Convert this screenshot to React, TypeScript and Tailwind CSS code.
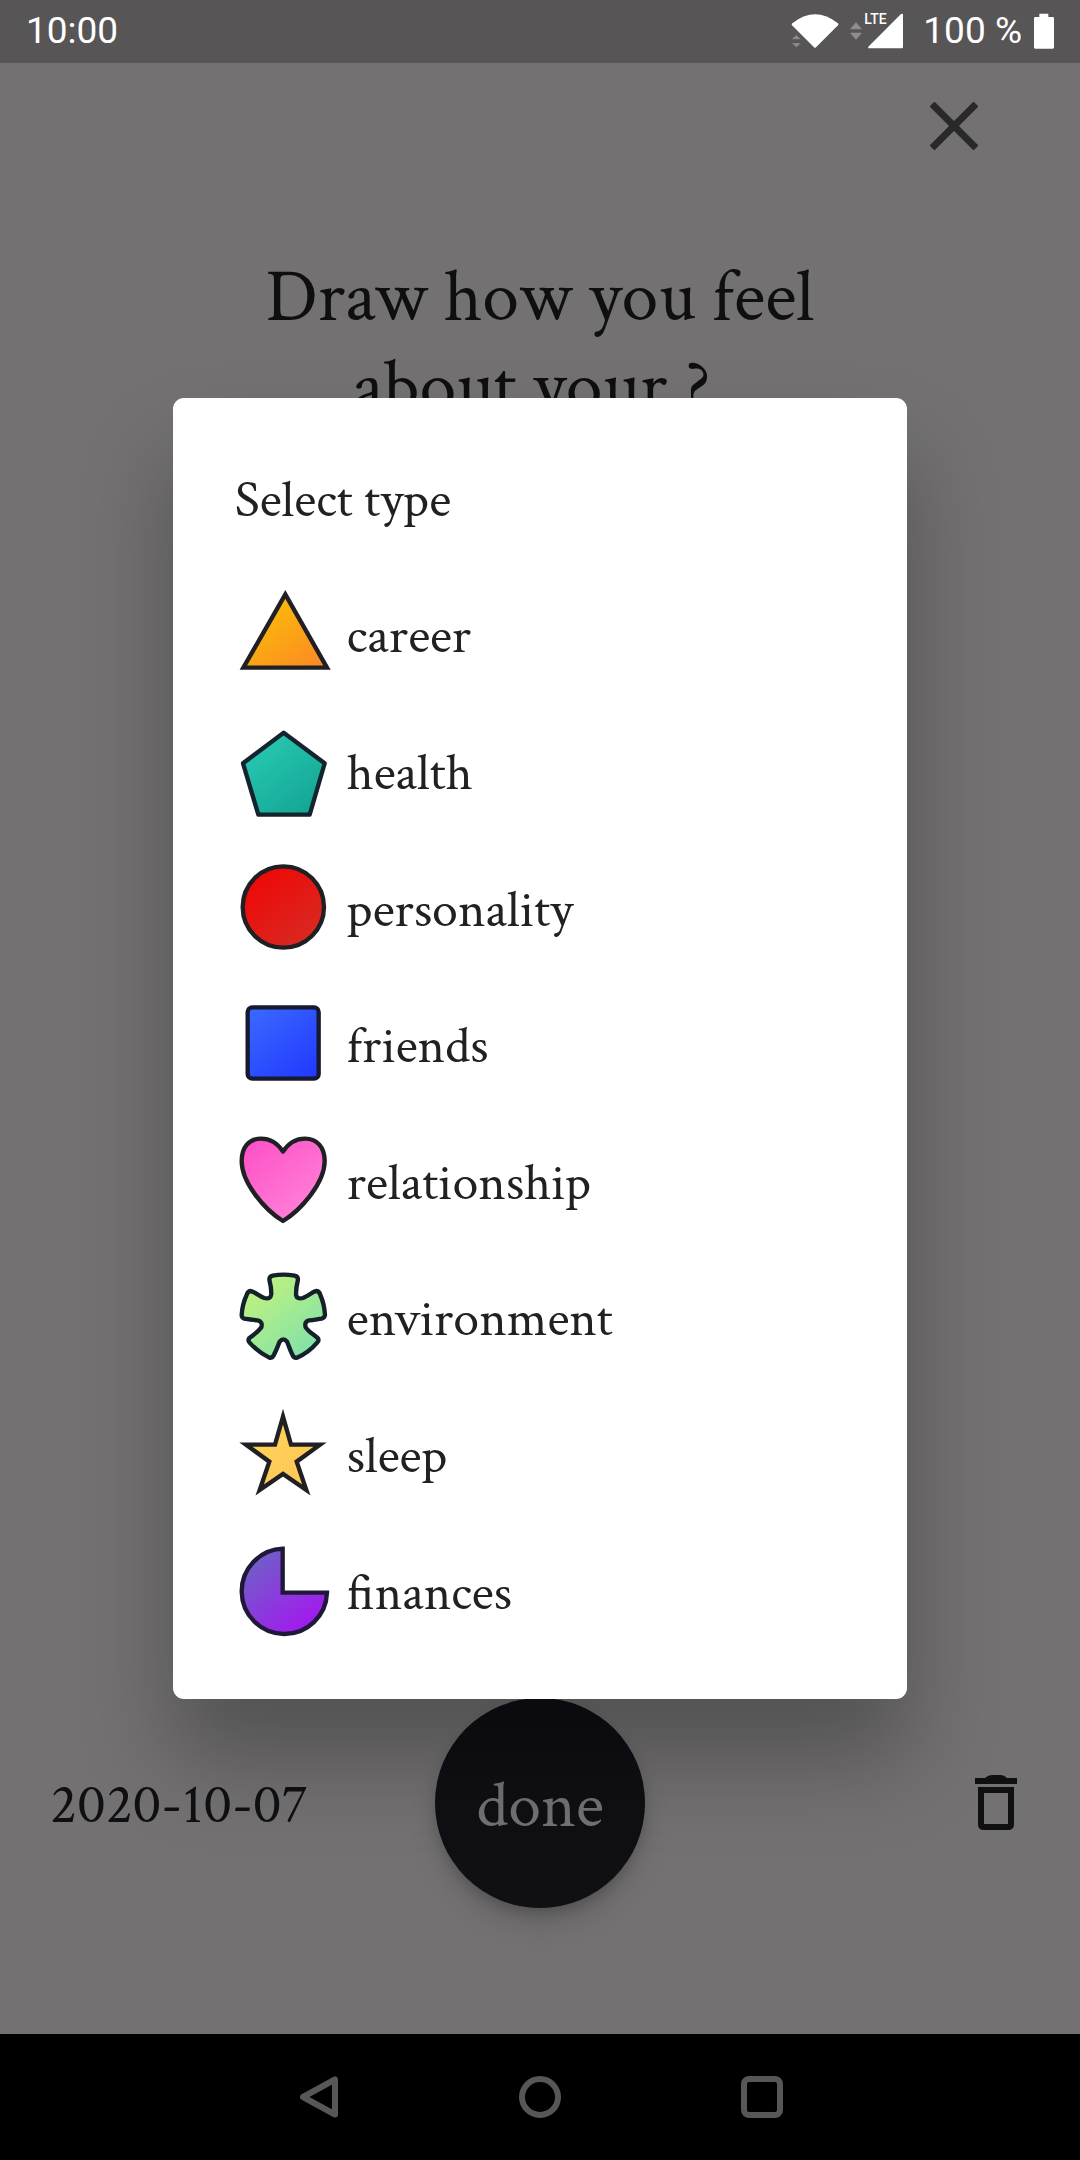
import type { ReactNode } from "react";

const OUTLINE = "#1f1f24";

type Kind = {
  name: string;
  from: string;
  to: string;
  outline?: string;
  join?: "round" | "miter";
  shape: ReactNode;
};

const KINDS: Kind[] = [
  {
    name: "career",
    from: "#fcc404",
    to: "#fb8a24",
    join: "miter",
    shape: <path d="M151 25 25 245H276Z" />,
  },
  {
    name: "health",
    from: "#2accb4",
    to: "#12a392",
    outline: "#14242e",
    shape: <path d="M146 29 24 121 70 275H224L269 121Z" />,
  },
  {
    name: "personality",
    from: "#f00505",
    to: "#d72c24",
    shape: <circle cx="145" cy="141" r="122" />,
  },
  {
    name: "friends",
    from: "#3a68ff",
    to: "#2239ff",
    outline: "#151a30",
    shape: <rect x="38" y="34" width="213" height="214" rx="14" />,
  },
  {
    name: "relationship",
    from: "#ff50c6",
    to: "#ff86da",
    shape: (
      <path d="M144 264C90 231 20 150 20 84 20 42 42 17 78 17 108 17 129 33 144 56 159 33 180 17 210 17 246 17 269 42 269 84 269 150 198 231 144 264Z" />
    ),
  },
  {
    name: "environment",
    from: "#c6f47a",
    to: "#7ce0ac",
    outline: "#14202a",
    shape: (
      <path d="M103 32Q103 22 113 20 145 14 179 20 189 22 189 32 183 55 183 75 184 92 204 87C225 78 235 66 245 66Q253 67 256 78 268 105 270 138 269 146 260 149C245 151 235 153 222 154Q207 158 212 175C222 190 238 197 248 207Q253 213 247 220 222 250 186 266 177 268 173 259C165 243 162 232 156 218Q145 204 134 218C128 232 124 245 116 259Q111 268 103 266 70 250 43 220 38 213 43 207C60 195 70 187 79 175Q84 158 68 154C55 153 40 151 28 149Q20 146 20 138 22 105 35 78 38 67 46 66C60 68 70 80 88 87Q107 92 109 75 109 55 103 32Z" />
    ),
  },
  {
    name: "sleep",
    from: "#ffd65a",
    to: "#ffc456",
    join: "miter",
    shape: (
      <path d="M144 32 168 116H255L185 167 214 252 144 204 74 252 103 167 33 116H120Z" />
    ),
  },
  {
    name: "finances",
    from: "#6a66c4",
    to: "#aa10f4",
    outline: "#1f1838",
    join: "miter",
    shape: <path d="M143 17V149H276A128 128 0 1 1 143 17Z" />,
  },
];

function KindIcon({ kind }: { kind: Kind }) {
  const id = `fill-${kind.name}`;
  return (
    <svg viewBox="0 0 288 288" className="size-24 shrink-0" aria-hidden="true">
      <defs>
        <linearGradient id={id} x1="0.1" y1="0" x2="0.9" y2="1">
          <stop offset="0" stopColor={kind.from} />
          <stop offset="1" stopColor={kind.to} />
        </linearGradient>
      </defs>
      <g
        fill={`url(#${id})`}
        stroke={kind.outline ?? OUTLINE}
        strokeWidth="13"
        strokeLinejoin={kind.join ?? "round"}
      >
        {kind.shape}
      </g>
    </svg>
  );
}

function StatusBar() {
  return (
    <div className="flex h-[63px] items-start justify-between bg-[#575556] px-[26px] pt-2 font-['Roboto',sans-serif] text-[37px] leading-[46px] text-white">
      <span>10:00</span>
      <div className="flex items-center">
        <svg viewBox="85 40 150 108" className="mr-2.5 h-9 w-[50px]" aria-hidden="true">
          <path
            d="M92 71Q160 17 229 71Q231 74 229 77L163 143Q160 146 157 143L91 77Q89 74 92 71Z"
            fill="#fff"
          />
          <path
            d="M90 119 104 106 118 119ZM90 130H118L104 143Z"
            fill="#8f8d8e"
            stroke="#575556"
            strokeWidth="1"
          />
        </svg>
        <svg viewBox="0 0 36 54" className="mr-1.5 h-[18px] w-3" aria-hidden="true">
          <path d="M0 22 18 1 36 22ZM0 32H36L18 53Z" fill="#8f8d8e" />
        </svg>
        <div className="relative mr-5">
          <svg viewBox="0 0 105 108" className="h-9 w-[35px]" aria-hidden="true">
            <path d="M1 101 99 3Q105 0 105 6V102Q105 106 101 106H4Q-1 106 1 101Z" fill="#fff" />
          </svg>
          <span className="absolute -top-0.5 -left-1 text-[14px] leading-4 font-medium">
            LTE
          </span>
        </div>
        <span className="mr-3">100 %</span>
        <svg viewBox="0 0 60 108" className="h-9 w-5" aria-hidden="true">
          <path d="M16 2H43V12H56Q60 12 60 16V103Q60 107 56 107H4Q0 107 0 103V16Q0 12 4 12H16Z" fill="#fff" />
        </svg>
      </div>
    </div>
  );
}

function NavBar() {
  return (
    <nav className="flex h-[126px] items-center justify-center gap-[180px] bg-black">
      <button type="button" aria-label="Back">
        <svg viewBox="0 0 42 42" className="size-[42px]" fill="none" stroke="#575757" strokeWidth="6" strokeLinejoin="round">
          <path d="M38 3.500V38.500L6 21Z" />
        </svg>
      </button>
      <button type="button" aria-label="Home">
        <svg viewBox="0 0 42 42" className="size-[42px]" fill="none" stroke="#575757" strokeWidth="6">
          <circle cx="21" cy="21" r="18" />
        </svg>
      </button>
      <button type="button" aria-label="Overview">
        <svg viewBox="0 0 42 42" className="size-[42px]" fill="none" stroke="#575757" strokeWidth="6">
          <rect x="3" y="3" width="36" height="36" rx="5" />
        </svg>
      </button>
    </nav>
  );
}

function TypeDialog() {
  return (
    <div
      role="dialog"
      aria-modal="true"
      aria-labelledby="type-title"
      className="w-[68%] rounded-[11px] bg-white px-[62px] pt-16 pb-10 text-[#212121] shadow-[0_60px_90px_rgba(0,0,0,0.28)]"
    >
      <h2 id="type-title" className="mb-[26px] text-[52px] leading-[78px]">
        Select type
      </h2>
      <ul className="grid h-[1093px] grid-rows-8">
        {KINDS.map((kind) => (
          <li key={kind.name} className="flex">
            <button type="button" className="flex w-full items-center gap-4 text-left text-[52px] leading-none">
              <KindIcon kind={kind} />
              <span className="pt-1.5">{kind.name}</span>
            </button>
          </li>
        ))}
      </ul>
    </div>
  );
}

export default function App() {
  return (
    <div className="flex min-h-screen flex-col bg-[#737172] font-['Crimson_Text','Liberation_Serif',serif]">
      <StatusBar />
      <main className="relative flex flex-1 flex-col">
        <div className="flex h-[126px] items-center justify-end pr-[102px]">
          <button type="button" aria-label="Close">
            <svg viewBox="0 0 48 48" className="size-12" stroke="#2a2929" strokeWidth="7">
              <path d="M2 2 46 46M46 2 2 46" />
            </svg>
          </button>
        </div>
        <h1 className="pt-16 text-center text-[74px] leading-[90px] text-[#0f0f0f]">
          Draw how you feel
          <br />
          about your ?&nbsp;
        </h1>
        <div className="flex-1" />
        <footer className="grid grid-cols-3 items-center px-[50px] pb-[126px]">
          <time dateTime="2020-10-07" className="pt-1.5 text-[57px] text-[#0f0f14]">
            2020-10-07
          </time>
          <button
            type="button"
            className="size-[210px] justify-self-center rounded-full bg-[#0f0f14] pt-1.5 text-[66px] text-[#737172] shadow-[0_8px_14px_-3px_rgba(0,0,0,0.2),0_16px_28px_rgba(0,0,0,0.12)]"
          >
            done
          </button>
          <button type="button" aria-label="Delete" className="mr-3 justify-self-end">
            <svg viewBox="0 0 42 56" className="h-14 w-11">
              <path d="M0 3H10Q13 0 17 0H26Q29 0 32 3H42V9H0Z" fill="#101010" />
              <path
                d="M6 15H36V49Q36 52 33 52H9Q6 52 6 49Z"
                fill="none"
                stroke="#101010"
                strokeWidth="6"
              />
            </svg>
          </button>
        </footer>
        <div className="absolute inset-0 flex items-center justify-center">
          <TypeDialog />
        </div>
      </main>
      <NavBar />
    </div>
  );
}
